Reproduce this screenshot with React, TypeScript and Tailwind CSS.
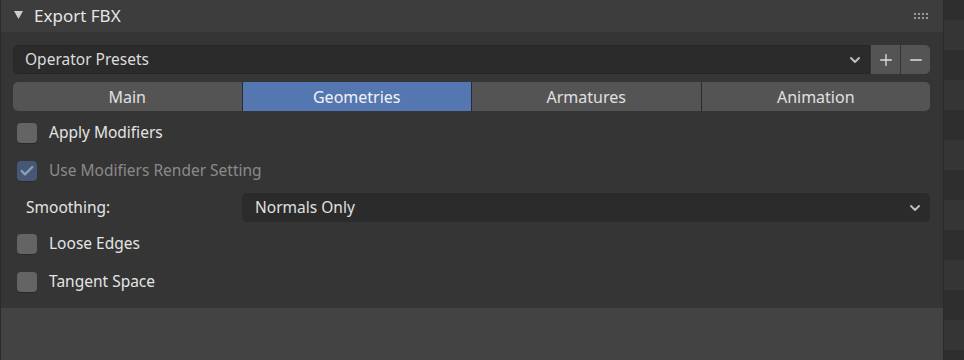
import { ChevronDown, Check, Plus, Minus } from 'lucide-react';
import type React from 'react';

const font = { fontFamily: '"Noto Sans", "Open Sans", sans-serif' };

const CheckRow: React.FC<{ label: string; checked?: boolean; disabled?: boolean }> = ({ label, checked = false, disabled = false }) => (
  <div className="flex h-[38px] items-center pl-[4px]">
    <div
      className={`flex h-[20px] w-[20px] items-center justify-center rounded-[4px] ${
        checked ? 'bg-[#475875]' : 'bg-[#646464]'
      } shadow-[0_1px_0_#2a2a2a]`}>
      {checked && <Check className="h-[16px] w-[16px] text-[#8d9dba]" strokeWidth={3.5} />}
    </div>
    <span className={`ml-[12px] text-[15.5px] ${disabled ? 'text-[#8a8a8a]' : 'text-[#e4e4e4]'}`}>{label}</span>
  </div>
);

const tabs = ['Main', 'Geometries', 'Armatures', 'Animation'];

export default function App() {
  return (
    <div className="flex h-[360px] w-[964px] overflow-hidden bg-[#2e2e2e]" style={font}>
      <div className="flex w-[944px] flex-col border-l border-r border-[#2a2a2a] bg-[#434343]">
        {/* header */}
        <div className="flex h-[32px] items-center bg-[#3d3d3d] pl-[13px] pr-[15px]">
          <svg width="9" height="8" viewBox="0 0 9 8" className="mb-[3px]">
            <polygon points="0,0 9,0 4.5,8" fill="#cccccc" />
          </svg>
          <span className="mb-px ml-[11px] text-[17px] text-[#e6e6e6]">Export FBX</span>
          <div className="ml-auto grid grid-cols-4 gap-x-[2px] gap-y-[2px]">
            {Array.from({ length: 8 }).map((_, i) => (
              <div key={i} className="h-[2px] w-[2px] bg-[#9a9a9a]" />
            ))}
          </div>
        </div>

        {/* body */}
        <div className="flex h-[276px] flex-col bg-[#353535] pl-[12px] pr-[13px] pt-[13px]">
          <div className="flex h-[29px]">
            <div className="flex flex-1 items-center rounded-l-[5px] border border-[#262626] bg-[#2b2b2b] pl-[11px] pr-[6px] text-[15.5px] text-[#dcdcdc]">
              <span>Operator Presets</span>
              <ChevronDown className="ml-auto h-[16px] w-[16px] text-[#bdbdbd]" strokeWidth={3} />
            </div>
            <div className="ml-px flex w-[29px] items-center justify-center bg-[#545454]">
              <Plus className="h-[18px] w-[18px] text-[#e0e0e0]" strokeWidth={1.8} />
            </div>
            <div className="ml-px flex w-[29px] items-center justify-center rounded-r-[5px] bg-[#545454]">
              <Minus className="h-[18px] w-[18px] text-[#e0e0e0]" strokeWidth={1.8} />
            </div>
          </div>

          <div className="mt-[8px] flex h-[29px] overflow-hidden rounded-[5px] bg-[#2b2b2b]">
            {tabs.map((t, i) => (
              <div
                key={t}
                className={`flex flex-1 items-center justify-center text-[16px] ${i > 0 ? 'ml-px' : ''} ${
                  t === 'Geometries' ? 'bg-[#5477b2] text-[#f2f2f2]' : 'bg-[#545454] text-[#e0e0e0]'
                }`}>
                {t}
              </div>
            ))}
          </div>

          <div className="mt-[3px] flex flex-col">
            <CheckRow label="Apply Modifiers" />
            <CheckRow label="Use Modifiers Render Setting" checked disabled />
            <div className="flex h-[35px] items-center">
              <span className="w-[229px] pl-[13px] text-[15.5px] text-[#e4e4e4]">Smoothing:</span>
              <div className="flex h-[29px] flex-1 items-center rounded-[5px] border border-[#2a2a2a] bg-[#2b2b2b] pl-[12px] pr-[6px] text-[15.5px] text-[#e0e0e0]">
                <span>Normals Only</span>
                <ChevronDown className="ml-auto h-[16px] w-[16px] text-[#bdbdbd]" strokeWidth={3} />
              </div>
            </div>
            <CheckRow label="Loose Edges" />
            <CheckRow label="Tangent Space" />
          </div>
        </div>
        <div className="flex-1" />
      </div>
      <div className="flex flex-1 flex-col">
        {Array.from({ length: 12 }).map((_, i) => (
          <div
            key={i}
            className={`shrink-0 ${i === 0 ? 'h-[20px]' : 'h-[30px]'} ${i % 2 === 0 ? 'bg-[#2e2e2e]' : 'bg-[#353535]'}`}
          />
        ))}
      </div>
    </div>
  );
}
